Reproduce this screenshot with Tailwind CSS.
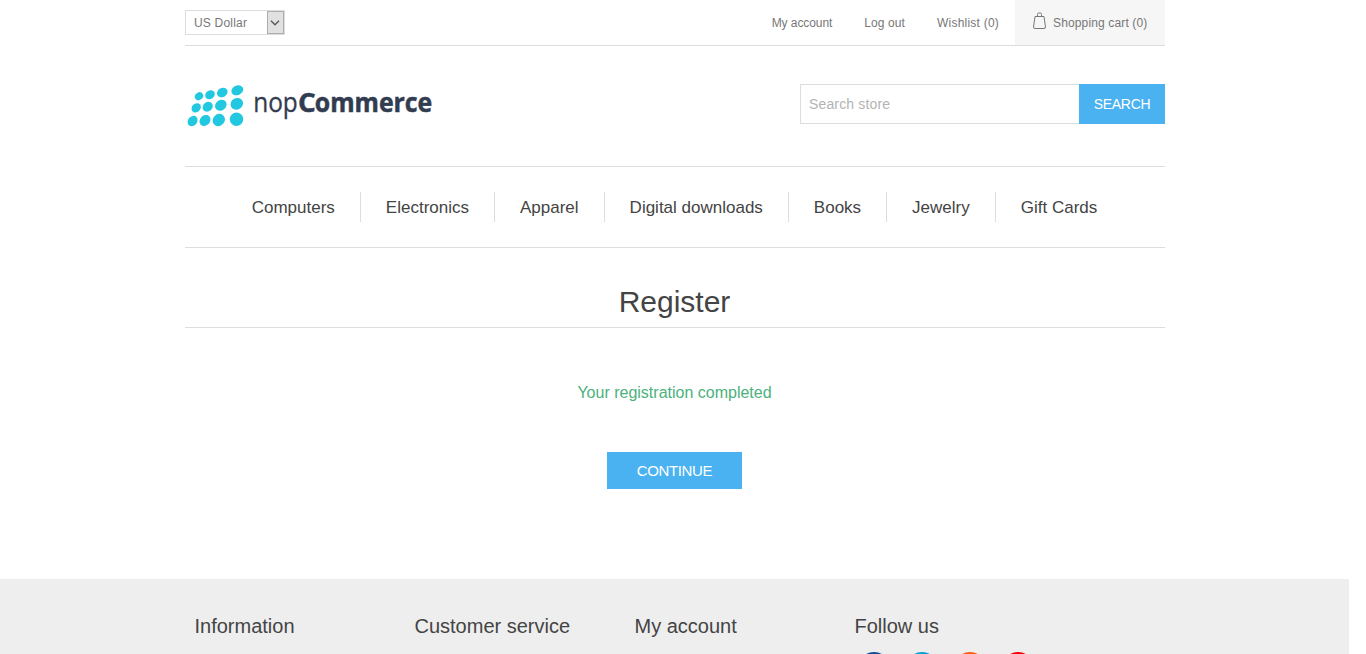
<!DOCTYPE html>
<html lang="en">
<head>
<meta charset="utf-8">
<title>Register</title>
<script src="https://cdn.jsdelivr.net/npm/@tailwindcss/browser@4"></script>
</head>
<body class="bg-white h-[654px] overflow-hidden font-['Liberation_Sans',Arial,sans-serif] text-[#444]">
<div class="w-[1349px] h-[654px] overflow-hidden flex flex-col">
  <div class="w-[980px] mx-auto shrink-0">
    <header>
      <div class="h-[46px] border-b border-[#ddd] flex justify-between text-xs text-[#777]">
        <div class="mt-[10px] w-[100px] h-[25px] border border-[#ddd] flex items-center justify-between pl-[8.500px] leading-none">
          <span class="tracking-[0.2px]">US Dollar</span>
          <span class="w-[17px] h-[23px] bg-[#e1e1e1] border border-[#adadad] flex items-center justify-center">
            <svg class="shrink-0" width="10" height="6" viewBox="0 0 10 6" fill="none" stroke="#555" stroke-width="1.3"><path d="M1 .8 5 4.8 9 .8"/></svg>
          </span>
        </div>
        <nav class="flex leading-[46px] h-[45px]">
          <a class="mr-8 tracking-[-0.08px]">My account</a>
          <a class="mr-8 tracking-[0.1px]">Log out</a>
          <a class="mr-[15.500px] tracking-[0.22px]">Wishlist (0)</a>
          <a class="w-[150px] bg-[#f6f6f6] pl-[18px] flex">
            <svg class="mt-[12px] mr-[7.500px] shrink-0" width="13" height="18" viewBox="0 0 13 18" fill="none" stroke="#777" stroke-width="1"><path d="M2 4.500h9l1.500 10.500q0 1.500-1.500 1.500h-9q-1.500 0-1.500-1.500ZM4.500 4.500v-2q0-1.500 1-1.500h2q1 0 1 1.500v2"/></svg>
            <span class="tracking-[0.14px]">Shopping cart (0)</span>
          </a>
        </nav>
      </div>
      <div class="h-[120px] pt-[38px] flex justify-between">
        <svg width="260" height="48" viewBox="185 84 260 48">
          <g fill="#21c8e0">
            <ellipse cx="199" cy="96.300" rx="4.400" ry="3.700" transform="rotate(-35 199 96.300)"/>
            <ellipse cx="210" cy="94.700" rx="5.100" ry="4.200" transform="rotate(-35 210 94.700)"/>
            <ellipse cx="222.300" cy="92.500" rx="5.600" ry="4.500" transform="rotate(-30 222.300 92.500)"/>
            <ellipse cx="237.300" cy="90.300" rx="6.100" ry="4.800" transform="rotate(-25 237.300 90.300)"/>
            <ellipse cx="196.200" cy="107.800" rx="5.100" ry="4.200" transform="rotate(-45 196.200 107.800)"/>
            <ellipse cx="207.700" cy="106.700" rx="5.400" ry="4.600" transform="rotate(-40 207.700 106.700)"/>
            <ellipse cx="220.800" cy="105.300" rx="6.100" ry="5.100" transform="rotate(-35 220.800 105.300)"/>
            <ellipse cx="236.800" cy="103.800" rx="6.400" ry="5.700" transform="rotate(-30 236.800 103.800)"/>
            <ellipse cx="192.600" cy="121" rx="5.600" ry="4.500" transform="rotate(-50 192.600 121)"/>
            <ellipse cx="205" cy="120.500" rx="6" ry="5" transform="rotate(-45 205 120.500)"/>
            <ellipse cx="218.800" cy="120" rx="6.500" ry="5.800" transform="rotate(-45 218.800 120)"/>
            <circle cx="236.500" cy="119.300" r="6.700"/>
          </g>
          <g fill="#323c50" stroke="#323c50" font-family="'Open Sans','Noto Sans',sans-serif">
            <text x="253.200" y="112.300" font-size="26.500" stroke-width=".3" textLength="44.600" lengthAdjust="spacingAndGlyphs">nop</text>
            <text y="112.300" font-size="26" stroke-width=".5" font-weight="700"><tspan x="297.900" textLength="17.800" lengthAdjust="spacingAndGlyphs">C</tspan><tspan x="314.800" textLength="117.500" lengthAdjust="spacingAndGlyphs">ommerce</tspan></text>
          </g>
        </svg>
        <form class="flex h-10 text-sm">
          <input class="w-[279px] h-10 border border-r-0 border-[#ddd] pl-[8.500px] tracking-[0.15px] placeholder:text-[#b3b3b3] outline-none" placeholder="Search store">
          <button type="button" class="w-[86px] h-10 pl-px bg-[#4ab2f1] text-white tracking-[-0.3px]">SEARCH</button>
        </form>
      </div>
    </header>
    <nav class="h-[82px] border-y border-[#ddd] flex justify-center items-center text-[17px] leading-[30px]">
      <a class="px-[25px] border-r border-[#ddd] h-[30px]"><span class="block pt-px">Computers</span></a>
      <a class="px-[25px] border-r border-[#ddd] h-[30px]"><span class="block pt-px">Electronics</span></a>
      <a class="px-[25px] border-r border-[#ddd] h-[30px]"><span class="block pt-px">Apparel</span></a>
      <a class="px-[25px] border-r border-[#ddd] h-[30px]"><span class="block pt-px">Digital downloads</span></a>
      <a class="px-[25px] border-r border-[#ddd] h-[30px]"><span class="block pt-px">Books</span></a>
      <a class="px-[25px] border-r border-[#ddd] h-[30px]"><span class="block pt-px">Jewelry</span></a>
      <a class="px-[25px] h-[30px]"><span class="block pt-px">Gift Cards</span></a>
    </nav>
    <main class="h-[331px] flex flex-col items-center">
      <h1 class="w-full h-20 border-b border-[#ddd] pt-[29px] text-center text-[30px] leading-[50px]">Register</h1>
      <p class="mt-[52px] text-base leading-[26px] text-[#4cb17c]">Your registration completed</p>
      <button type="button" class="mt-[46px] w-[135px] h-[37px] pt-[2px] bg-[#4ab2f1] text-white text-[15px] tracking-[-0.38px]">CONTINUE</button>
    </main>
  </div>
  <footer class="w-full h-[75px] shrink-0 overflow-hidden bg-[#eee]">
    <div class="w-[980px] mx-auto pl-[10px] pt-[32px] flex text-xl leading-[30px]">
      <h2 class="w-[220px]">Information</h2>
      <h2 class="w-[220px]">Customer service</h2>
      <h2 class="w-[220px]">My account</h2>
      <div>
        <h2>Follow us</h2>
        <div class="flex gap-4 mt-[11px] ml-[3.500px]">
          <span class="size-8 rounded-full bg-[#124a97]"></span>
          <span class="size-8 rounded-full bg-[#00a2d3]"></span>
          <span class="size-8 rounded-full bg-[#ff5d0b]"></span>
          <span class="size-8 rounded-full bg-[#f50000]"></span>
        </div>
      </div>
    </div>
  </footer>
</div>
</body>
</html>
